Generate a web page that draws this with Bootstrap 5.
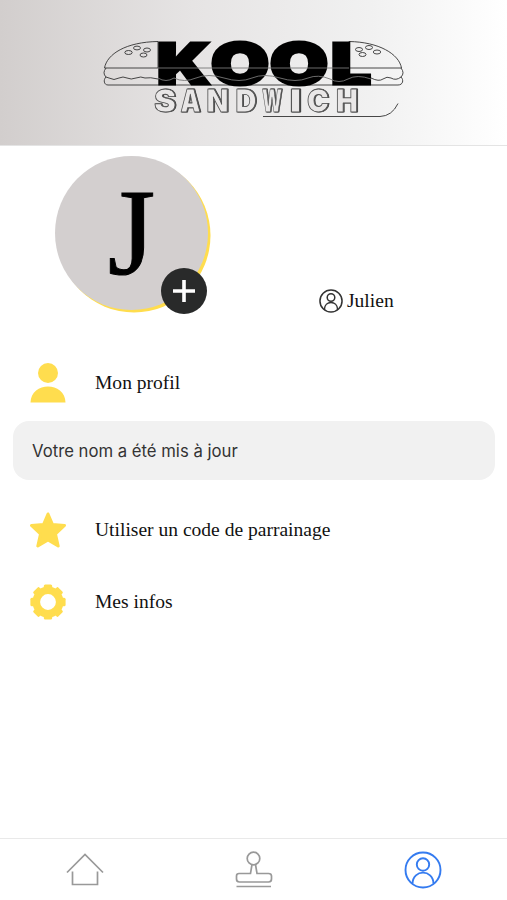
<!DOCTYPE html>
<html lang="fr">
<head>
<meta charset="utf-8">
<meta name="viewport" content="width=device-width, initial-scale=1">
<title>Kool Sandwich</title>
<link href="https://cdn.jsdelivr.net/npm/bootstrap@5.3.0/dist/css/bootstrap.min.css" rel="stylesheet">
<style>
body{font-family:"Liberation Serif",serif;font-size:19.55px;color:#111;background:#fff}
svg{display:block;flex:none}
.brand-bar{height:146px;background:linear-gradient(90deg,#d2cecd 0,#e6e4e4 38%,#f1f1f1 73%,#fff 100%);border-bottom:1px solid #e4e4e4}
.kool{font:900 56px Inter,sans-serif}
.sandwich{font:900 32px Inter,sans-serif;stroke-linejoin:round;filter:drop-shadow(1px .6px 0 #444)}
.profile-head{height:201px;padding:10px 0 0 55px}
.avatar{width:153px;height:154px;background:#d3cfcf;box-shadow:2.5px 2.5px 0 #ffdd4e}
.initial{font-size:122px;line-height:153px;color:#000;-webkit-text-stroke:1px #000}
.add-btn{width:46px;height:46px;left:106px;top:112px;background:#292a2a}
.user-name{margin:133px 0 0 111px;gap:4px;line-height:24px}
.user-name span,.menu-item span{margin-top:-1px}
.menu-item{height:72px;padding-left:30px;gap:29px;line-height:24px}
.notice{height:59px;margin:2px 12px 14px 13px;padding-left:19px;border-radius:16px;background:#f1f1f1;font:16.7px Inter,sans-serif;color:#333}
.tabs{height:62px;border-top:1px solid #e9e9e9}
</style>
<script src="https://cdn.jsdelivr.net/npm/bootstrap@5.3.0/dist/js/bootstrap.bundle.min.js"></script>
</head>
<body class="vh-100 d-flex flex-column overflow-hidden">
<header class="brand-bar flex-shrink-0 d-flex justify-content-center">
<svg width="507" height="145" viewBox="0 0 507 145" fill="none" stroke="#333" stroke-width=".9">
  <path d="M158 41.500C126 42 107 54 104.500 68H158zM349 41.500C379 42 399 54 401.500 68H349z"/>
  <path d="M106 68q-4 5 0 9l3 1q5 3 10 0 4-2 8 0t9 0 9 0q5-1 13 1M401 68q4 5 0 9-5 4-10 1-4-2-8 1t-12-1M106 77c-3 3-2 8 2 8H398c5 0 6-5 3-8"/>
  <g><ellipse cx="128.500" cy="52.500" rx="3.700" ry="2"/><ellipse cx="137" cy="48" rx="3.500" ry="1.900"/><ellipse cx="147" cy="50" rx="3.500" ry="2"/><ellipse cx="143.500" cy="55" rx="3.500" ry="2"/>
  <ellipse cx="359" cy="49.500" rx="3.500" ry="2"/><ellipse cx="369" cy="47.500" rx="3.500" ry="2"/><ellipse cx="377" cy="52" rx="3.700" ry="2"/><ellipse cx="362.500" cy="54.500" rx="3.500" ry="2"/></g>
  <text class="kool" y="83.500" fill="#000" stroke="#000" stroke-width="3.200"><tspan x="157" textLength="53" lengthAdjust="spacingAndGlyphs">K</tspan><tspan x="211" textLength="58" lengthAdjust="spacingAndGlyphs">O</tspan><tspan x="270" textLength="58" lengthAdjust="spacingAndGlyphs">O</tspan><tspan x="331" textLength="40" lengthAdjust="spacingAndGlyphs">L</tspan></text>
  <path stroke="#777" d="M158 68H349M158 78q8 5 16 0 10 5 22 0t28 0 28 0 28 0 28 0q10-4 22 1 9 5 18 0t23 0"/>
  <text class="sandwich" y="111.500" fill="#e9e7e7" stroke="#555" stroke-width=".9"><tspan x="154" textLength="22" lengthAdjust="spacingAndGlyphs">S</tspan><tspan x="180.500" textLength="20" lengthAdjust="spacingAndGlyphs">A</tspan><tspan x="206.500" textLength="22" lengthAdjust="spacingAndGlyphs">N</tspan><tspan x="235.500" textLength="21" lengthAdjust="spacingAndGlyphs">D</tspan><tspan x="262" textLength="20" lengthAdjust="spacingAndGlyphs">W</tspan><tspan x="289.500" textLength="12" lengthAdjust="spacingAndGlyphs">I</tspan><tspan x="307" textLength="22" lengthAdjust="spacingAndGlyphs">C</tspan><tspan x="336" textLength="22" lengthAdjust="spacingAndGlyphs">H</tspan></text>
  <path d="M263 116.500H380Q392 116 398 103.500"/>
</svg>
</header>
<main class="flex-grow-1">
  <section class="profile-head d-flex align-items-start">
    <div class="avatar rounded-circle position-relative text-center flex-shrink-0">
      <span class="initial">J</span>
      <button class="add-btn btn p-0 border-0 rounded-circle position-absolute d-flex align-items-center justify-content-center" aria-label="Ajouter">
        <svg width="22" height="24" viewBox="0 0 22 24" stroke="#fff" stroke-width="3.600"><path d="M11 1v22M0 12h22"/></svg>
      </button>
    </div>
    <div class="user-name d-flex align-items-center">
      <svg width="24" height="24" viewBox="0 0 38 38" fill="none" stroke="#333" stroke-width="2.400"><circle cx="19" cy="19" r="17.500"/><circle cx="19" cy="13.500" r="6"/><path d="M8.500 32.500C9 17.500 29 17.500 29.500 32.500"/></svg>
      <span>Julien</span>
    </div>
  </section>
  <div class="menu-item d-flex align-items-center">
    <svg width="36" height="40" viewBox="0 0 36 40" fill="#ffdd4e"><circle cx="18" cy="10" r="10"/><path d="M.5 39.500C1 18 35 18 35.500 39.500z"/></svg>
    <span>Mon profil</span>
  </div>
  <div class="notice d-flex align-items-center">Votre nom a été mis à jour</div>
  <div class="menu-item d-flex align-items-center">
    <svg width="36" height="36" viewBox="0 0 36 36" fill="#ffdd4e" stroke="#ffdd4e" stroke-width="3" stroke-linejoin="round"><path d="M18 2l4.500 10.500 12 1-9 8.500 2.700 12L18 28 7.800 34l2.700-12-9-8.500 12-1z"/></svg>
    <span>Utiliser un code de parrainage</span>
  </div>
  <div class="menu-item d-flex align-items-center">
    <svg width="36" height="36" viewBox="-18 -18 36 36" fill="#ffdd4e" stroke="#ffdd4e"><circle r="11.700" fill="none" stroke-width="7.600"/><g stroke="none"><rect id="tooth" x="-4.200" y="-17.600" width="8.400" height="6" rx="1.500"/><use href="#tooth" transform="rotate(45)"/><use href="#tooth" transform="rotate(90)"/><use href="#tooth" transform="rotate(135)"/><use href="#tooth" transform="rotate(180)"/><use href="#tooth" transform="rotate(225)"/><use href="#tooth" transform="rotate(270)"/><use href="#tooth" transform="rotate(315)"/></g></svg>
    <span>Mes infos</span>
  </div>
</main>
<nav class="tabs row g-0 flex-shrink-0 align-items-center">
  <a class="col d-flex justify-content-center" href="#" aria-label="Accueil"><svg width="38" height="38" viewBox="0 0 38 38" fill="none" stroke="#999" stroke-width="1.700"><path d="M1 21.500L19 3.500l18 18M6.500 20.500V33.500H31.500V20.500"/></svg></a>
  <a class="col d-flex justify-content-center" href="#" aria-label="Tampons"><svg width="38" height="38" viewBox="0 0 38 38" fill="none" stroke="#999" stroke-width="1.700"><circle cx="18.500" cy="7.500" r="6.300"/><path d="M17 13.500L15.500 22.500H4Q1.500 22.500 1.500 25v3q0 3 3 3h29q3 0 3-3v-3q0-2.500-3-2.500H22L20.500 13.500M1.500 35.500H36"/></svg></a>
  <a class="col d-flex justify-content-center" href="#" aria-label="Profil"><svg width="38" height="38" viewBox="0 0 38 38" fill="none" stroke="#347bf0" stroke-width="1.900"><circle cx="19" cy="19" r="17.500"/><circle cx="19" cy="13.500" r="6.200"/><path d="M8.500 32.500C9 18 29 18 29.500 32.500"/></svg></a>
</nav>
</body>
</html>
